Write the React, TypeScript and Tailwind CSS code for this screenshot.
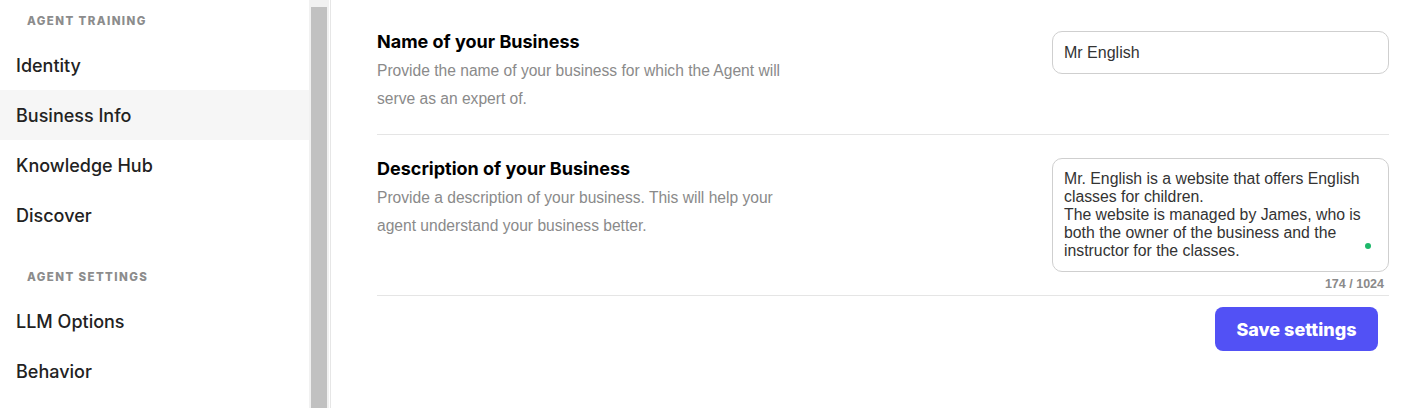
export default function App() {
  const training = ['Identity', 'Business Info', 'Knowledge Hub', 'Discover']
  const settings = ['LLM Options', 'Behavior']
  const active = 'Business Info'

  const description =
    'Mr. English is a website that offers English classes for children.\nThe website is managed by James, who is both the owner of the business and the instructor for the classes.'

  return (
    <div className="flex h-[408px] w-[1424px] overflow-hidden bg-white font-['Inter',sans-serif]">
      {/* sidebar */}
      <div className="flex shrink-0 border-r border-[#e6e6e6]">
        <div className="w-[309px]">
          <div className="pl-[27px] pt-[14px] pb-[12px] text-[11.5px] leading-[14px] font-extrabold tracking-[1.4px] text-[#8c8c8c]">
            AGENT TRAINING
          </div>
          {training.map((item) => (
            <div
              key={item}
              className={
                'flex h-[50px] items-center px-4 text-[18px] font-medium text-[#222] ' +
                (item === active ? 'bg-[#f6f6f6]' : '')
              }
            >
              {item}
            </div>
          ))}
          <div className="pl-[27px] pt-[30px] pb-[12px] text-[11.5px] leading-[14px] font-extrabold tracking-[1.4px] text-[#8c8c8c]">
            AGENT SETTINGS
          </div>
          {settings.map((item) => (
            <div
              key={item}
              className="flex h-[50px] items-center px-4 text-[18px] font-medium text-[#222]"
            >
              {item}
            </div>
          ))}
        </div>
        <div className="w-[20px] bg-[#f1f1f1] px-[2px] pt-[7px]">
          <div className="h-full bg-[#c1c1c1]" />
        </div>
        <div className="w-[1px] bg-white" />
      </div>

      {/* main */}
      <div className="flex-1 pl-[46px] pr-[35px] pt-[31px]">
        <div className="flex justify-between border-b border-[#e5e5e5] pb-[21px]">
          <div className="w-[412px]">
            <div className="text-[18px] leading-[22px] font-bold text-black">Name of your Business</div>
            <p className="mt-[4px] font-['Liberation_Sans',Arial,sans-serif] text-[15.6px] leading-[28px] text-[#8a8a8a]">
              Provide the name of your business for which the Agent will serve as an expert of.
            </p>
          </div>
          <input
            readOnly
            value="Mr English"
            className="h-[43px] w-[337px] rounded-[10px] border border-[#cfcfcf] px-[11px] font-['Liberation_Sans',Arial,sans-serif] text-[16px] text-[#333] outline-none"
          />
        </div>

        <div className="flex justify-between pt-[23px]">
          <div className="w-[412px]">
            <div className="text-[18px] leading-[22px] font-bold text-black">Description of your Business</div>
            <p className="mt-[4px] font-['Liberation_Sans',Arial,sans-serif] text-[15.6px] leading-[28px] text-[#8a8a8a]">
              Provide a description of your business. This will help your agent understand your business better.
            </p>
          </div>
          <div className="w-[337px]">
            <div className="relative h-[114px] rounded-[10px] border border-[#cfcfcf] pl-[11px] pr-[20px] pt-[11px]">
              <div className="whitespace-pre-line font-['Liberation_Sans',Arial,sans-serif] text-[15.8px] leading-[18px] text-[#333]">
                {description}
              </div>
              <span className="absolute right-[17px] top-[84px] h-[6px] w-[6px] rounded-full bg-[#1db86a]" />
            </div>
            <div className="pr-[5px] pt-[4px] text-right font-['Liberation_Sans',Arial,sans-serif] text-[12.5px] leading-[16px] font-bold text-[#8a8a8a]">
              174 / 1024
            </div>
          </div>
        </div>
        <div className="border-b border-[#e5e5e5] pt-[3px]" />
        <div className="flex justify-end pr-[11px] pt-[11px]">
          <button className="h-[44px] w-[163px] rounded-[8px] bg-[#5251f5] text-[18px] font-extrabold text-white">
            Save settings
          </button>
        </div>
      </div>
    </div>
  )
}
